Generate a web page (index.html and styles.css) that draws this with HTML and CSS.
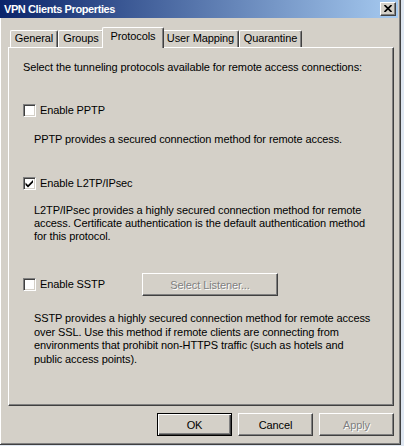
FILE: index.html
```html
<!DOCTYPE html>
<html>
<head>
<meta charset="utf-8">
<title>VPN Clients Properties</title>
<link rel="stylesheet" href="styles.css">
</head>
<body>
<div class="window">
  <div class="titlebar">
    <span class="title">VPN Clients Properties</span>
    <span class="close"><svg width="8" height="7" viewBox="0 0 8 7"><path d="M0.5 0 L7.5 7 M7.5 0 L0.5 7" stroke="#000" stroke-width="1.7" fill="none"/></svg></span>
  </div>
  <div class="client">
    <div class="tabs">
      <div class="tab t-general">General</div>
      <div class="tab t-groups">Groups</div>
      <div class="tab t-protocols active">Protocols</div>
      <div class="tab t-mapping">User Mapping</div>
      <div class="tab t-quarantine">Quarantine</div>
    </div>
    <div class="panel">
      <p class="intro">Select the tunneling protocols available for remote access connections:</p>

      <div class="row r-pptp">
        <span class="check"></span><span class="label">Enable PPTP</span>
      </div>
      <p class="desc d-pptp">PPTP provides a secured connection method for remote access.</p>

      <div class="row r-l2tp">
        <span class="check"><svg width="11" height="11" viewBox="0 0 11 11"><path d="M1.5 4.5 L4 7 L9 2 L9 4.5 L4 9.5 L1.5 7 Z" fill="#000"/></svg></span><span class="label">Enable L2TP/IPsec</span>
      </div>
      <p class="desc d-l2tp">L2TP/IPsec provides a highly secured connection method for remote<br>access. Certificate authentication is the default authentication method<br>for this protocol.</p>

      <div class="row r-sstp">
        <div class="checkgroup"><span class="check"></span><span class="label">Enable SSTP</span></div>
        <span class="btn listener disabled">Select Listener...</span>
      </div>
      <p class="desc d-sstp">SSTP provides a highly secured connection method for remote access<br>over SSL. Use this method if remote clients are connecting from<br>environments that prohibit non-HTTPS traffic (such as hotels and<br>public access points).</p>
    </div>
    <div class="buttons">
      <span class="btn default">OK</span>
      <span class="btn">Cancel</span>
      <span class="btn disabled">Apply</span>
    </div>
  </div>
</div>
</body>
</html>
```

FILE: styles.css
```css
* { box-sizing: border-box; }
html, body { margin: 0; padding: 0; }
body {
  width: 404px;
  height: 446px;
  overflow: hidden;
  background: #dfe7f1;
  font-family: "Liberation Sans", Arial, sans-serif;
  font-size: 11px;
  letter-spacing: -0.1px;
  color: #000;
}
.window {
  width: 401px;
  height: 445px;
  background: #d4d0c8;
  border-right: 1px solid #404040;
  border-bottom: 1px solid #404040;
  box-shadow: inset -1px -1px 0 #808080;
  display: flex;
  flex-direction: column;
}
.titlebar {
  height: 18px;
  margin-right: 2px;
  background: linear-gradient(to right, #0a246a, #a6caf0);
  display: flex;
  align-items: center;
  justify-content: space-between;
  padding: 0 2px 0 4px;
}
.title {
  color: #fff;
  font-weight: bold;
  font-size: 11px;
  letter-spacing: -0.4px;
  line-height: 13px;
}
.close {
  width: 16px;
  height: 14px;
  background: #d4d0c8;
  border: 1px solid;
  border-color: #fff #404040 #404040 #fff;
  box-shadow: inset -1px -1px 0 #808080;
  display: flex;
  align-items: center;
  justify-content: center;
}
.close svg { display: block; margin-top: -1px; }
.client {
  flex: 1;
  border-left: 1px solid #fff;
  padding: 9px 0 0 7px;
  display: flex;
  flex-direction: column;
}
.tabs {
  display: flex;
  align-items: flex-end;
  height: 20px;
  margin-left: 2px;
  position: relative;
  z-index: 1;
}
.tab {
  height: 17px;
  background: #d4d0c8;
  border-top: 1px solid #fff;
  border-left: 1px solid #fff;
  border-right: 1px solid #404040;
  box-shadow: inset -1px 0 0 #808080;
  border-radius: 2px 2px 0 0;
  text-align: center;
  line-height: 15px;
  white-space: nowrap;
}
.t-general { width: 48px; }
.t-groups { width: 46px; }
.t-protocols { width: 58px; }
.t-mapping { width: 77px; }
.t-quarantine { width: 63px; }
.tab.active {
  width: 62px;
  height: 21px;
  margin: 0 -2px -1px;
  position: relative;
  z-index: 2;
  line-height: 17px;
}
.panel {
  width: 386px;
  height: 359px;
  border-top: 1px solid #fff;
  border-left: 1px solid #fff;
  border-right: 1px solid #404040;
  border-bottom: 1px solid #404040;
  box-shadow: inset -1px -1px 0 #808080;
  padding: 13px 0 0 14px;
}
p { margin: 0; }
.intro { line-height: 13px; }
.row {
  display: flex;
  align-items: center;
  height: 13px;
}
.checkgroup { display: flex; align-items: center; width: 119px; }
.check {
  width: 13px;
  height: 13px;
  flex: none;
  background: #fff;
  border: 1px solid;
  border-color: #808080 #fff #fff #808080;
  box-shadow: inset 1px 1px 0 #404040, inset -1px -1px 0 #d4d0c8;
  display: flex;
  align-items: center;
  justify-content: center;
}
.check svg { display: block; }
.label { margin-left: 4px; line-height: 13px; white-space: nowrap; }
.desc { margin-left: 11px; line-height: 13px; white-space: nowrap; }
.r-pptp { margin-top: 30px; }
.d-pptp { margin-top: 16px; }
.r-l2tp { margin-top: 31px; }
.d-l2tp { margin-top: 14px; }
.r-sstp { margin-top: 30px; height: 23px; }
.d-sstp { margin-top: 16px; line-height: 13.5px; }
.btn {
  display: flex;
  align-items: center;
  justify-content: center;
  width: 75px;
  height: 23px;
  background: #d4d0c8;
  border: 1px solid;
  border-color: #fff #404040 #404040 #fff;
  box-shadow: inset -1px -1px 0 #808080;
  white-space: nowrap;
}
.btn.listener { width: 136px; }
.btn.default {
  border: 1px solid #000;
  box-shadow: inset 1px 1px 0 #fff, inset -1px -1px 0 #404040, inset -2px -2px 0 #808080;
}
.btn.disabled {
  color: #808080;
  text-shadow: 1px 1px 0 #fff;
}
.buttons {
  width: 386px;
  margin-top: 7px;
  display: flex;
  justify-content: flex-end;
  gap: 6px;
}
```
